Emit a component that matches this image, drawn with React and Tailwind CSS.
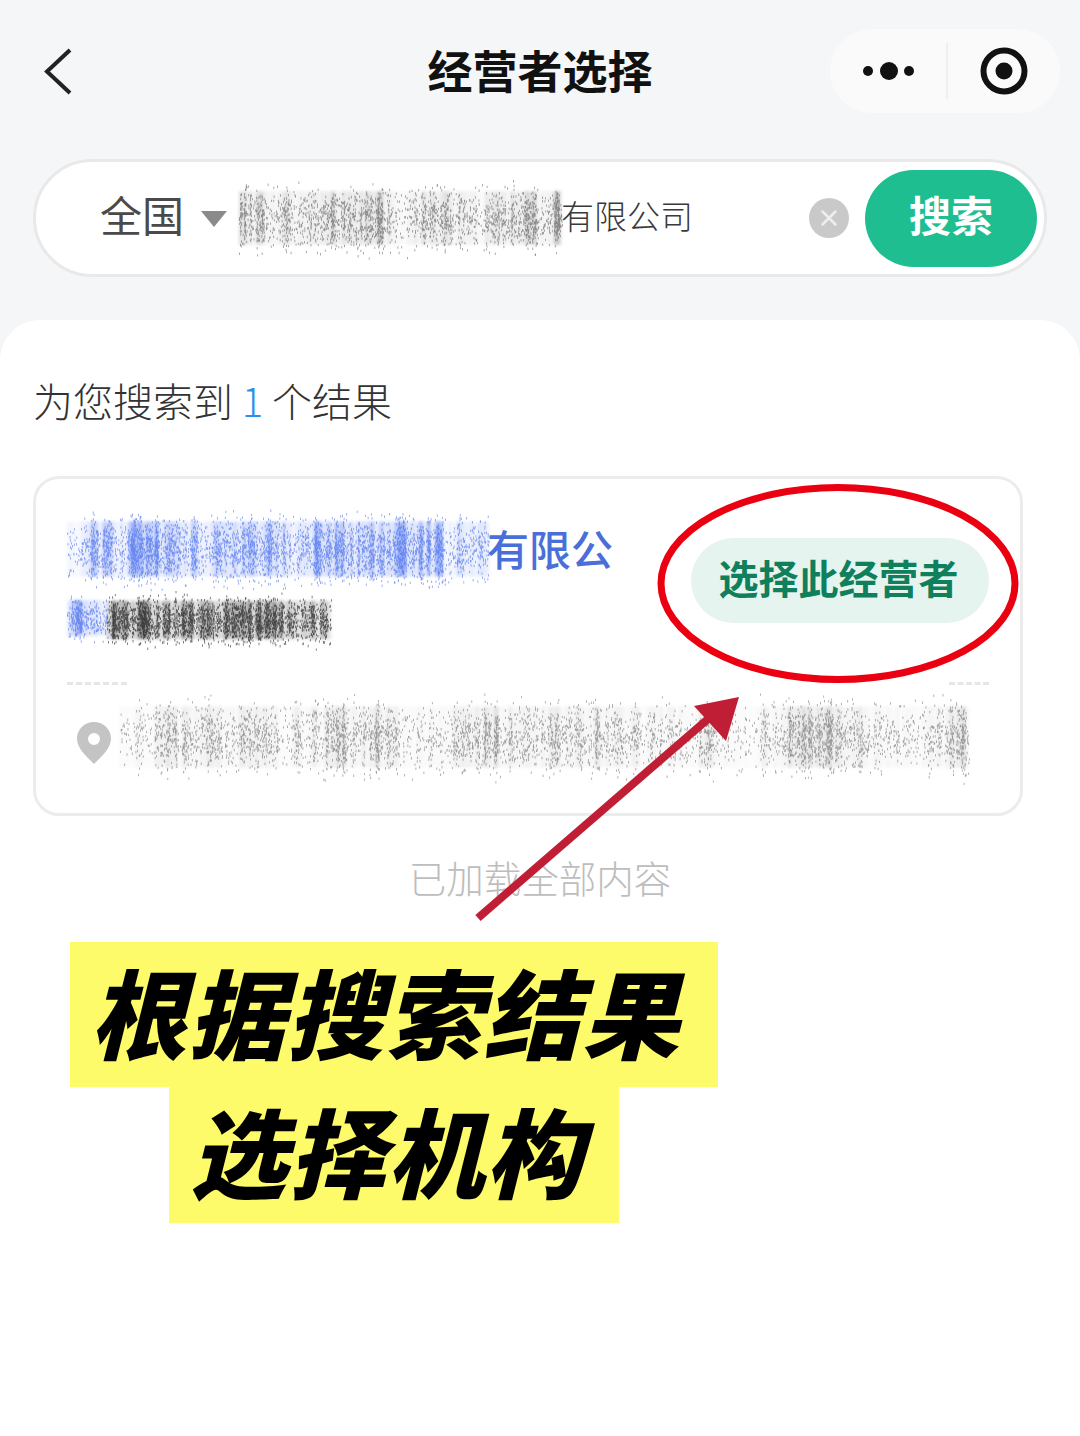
const CJK = "font-['Noto_Sans_CJK_SC','Noto_Sans',sans-serif]";

function seededRandom(seed) {
  let state = seed;
  return () => {
    state = (state + 0x6d2b79f5) | 0;
    let t = Math.imul(state ^ (state >>> 15), 1 | state);
    t = (t + Math.imul(t ^ (t >>> 7), 61 | t)) ^ t;
    return ((t ^ (t >>> 14)) >>> 0) / 4294967296;
  };
}

// the mosaic smear over private names in the photo: thin vertical streaks in uneven clumps
function buildSmear(width, height, seed, density, cell) {
  const random = seededRandom(seed);
  const bars = [];
  let dots = '';
  let x = 0;
  let clumpEnd = 0;
  let clump = 0.5;

  while (x < width) {
    if (x >= clumpEnd) {
      clumpEnd = x + cell * (0.3 + random());
      clump = 0.3 + random() * 0.7;
    }

    const barWidth = 1 + Math.floor(random() * 4);
    const strength = clump * (0.2 + random() * random() * 1.3);
    bars.push({ x, width: barWidth, strength: Math.min(strength, 1) });

    const count = Math.floor(barWidth * height * density * strength);
    for (let i = 0; i < count; i += 1) {
      const spread = (random() + random() + random()) / 3;
      const dotX = x + random() * barWidth;
      const dotY = spread * height;
      dots += `M${dotX.toFixed(1)} ${dotY.toFixed(1)}h0.8v2.4h-0.8z`;
    }

    x += barWidth;
  }

  return { bars, dots };
}

function Smear({ width, height, seed, color, density = 0.3, wash = 0.3, cell = 40, className = '' }) {
  const { bars, dots } = buildSmear(width, height, seed, density, cell);

  return (
    <svg
      width={width}
      height={height}
      viewBox={`0 0 ${width} ${height}`}
      className={`block shrink-0 overflow-visible ${className}`}
    >
      <g className="blur-[1.5px]">
        {bars.map((bar) => (
          <rect
            key={bar.x}
            x={bar.x}
            y={height * 0.18}
            width={bar.width}
            height={height * 0.64}
            fill={color}
            opacity={bar.strength * wash}
          />
        ))}
      </g>
      <path d={dots} fill={color} opacity="0.7" />
    </svg>
  );
}

function Capsule() {
  return (
    <div className="flex h-[84px] w-[230px] items-center rounded-full bg-[#fafafa]">
      <svg width="52" height="20" viewBox="0 0 52 20" className="ml-[33px]">
        <circle cx="5" cy="10" r="5" fill="#111" />
        <circle cx="26" cy="10" r="9" fill="#111" />
        <circle cx="46" cy="10" r="5" fill="#111" />
      </svg>
      <div className="ml-[31px] h-[56px] w-[2px] bg-[#efefef]" />
      <svg width="48" height="48" viewBox="0 0 48 48" className="ml-[32px]">
        <circle cx="24" cy="24" r="20.5" fill="none" stroke="#111" strokeWidth="6" />
        <circle cx="24" cy="24" r="8.5" fill="#111" />
      </svg>
    </div>
  );
}

function SearchBar() {
  return (
    <div className="mx-[33px] mt-[46px] flex h-[118px] items-center rounded-full border-[3px] border-[#e9e9e9] bg-white pr-[7px] pl-[64px]">
      <span className="pb-[9px] text-[42px] leading-none font-normal text-[#4a4a4a]">全国</span>
      <svg width="26" height="16" viewBox="0 0 26 16" className="mt-[2px] ml-[17px] blur-[0.5px]">
        <path d="M0 0h26L13 16z" fill="#8a8a8a" />
      </svg>
      <Smear width={322} height={84} seed={11} color="#6a6a6a" cell={34} wash={0.4} className="ml-[12px]" />
      <span className="pb-[6px] text-[33px] leading-none font-light text-[#3a3a3a]">有限公司</span>
      <svg width="40" height="40" viewBox="0 0 40 40" className="ml-auto">
        <circle cx="20" cy="20" r="20" fill="#c9c9c9" />
        <path d="M13.5 13.5l13 13M26.5 13.5l-13 13" stroke="#eee" strokeWidth="2.5" strokeLinecap="round" />
      </svg>
      <button
        type="button"
        className="ml-[16px] h-[97px] w-[172px] rounded-full bg-[#1ebe90] pb-[9px] text-[42px] font-bold text-white"
      >
        搜索
      </button>
    </div>
  );
}

function ResultCard() {
  return (
    <div className="mt-[49px] mr-[57px] ml-[33px] h-[340px] rounded-[26px] border-[3px] border-[#ececec] bg-white px-[31px]">
      <div className="flex h-[204px] items-start justify-between">
        <div className="pt-[27px]">
          <div className="flex items-center">
            <Smear width={422} height={86} seed={23} color="#4f74ee" cell={50} density={0.34} wash={0.6} />
            <span className="-ml-[2px] pb-[2px] text-[42px] leading-none font-medium text-[#4a6fd8]">有限公</span>
          </div>
          <div className="-mt-[2px] flex">
            <Smear width={40} height={56} seed={31} color="#4f74ee" cell={40} density={0.4} wash={0.65} />
            <Smear width={224} height={60} seed={37} color="#222" cell={44} density={0.45} wash={0.6} />
          </div>
        </div>
        <button
          type="button"
          className="mt-[59px] h-[85px] w-[298px] rounded-full bg-[#e6f4ef] pr-[3px] pb-[8px] text-[40px] font-bold text-[#0f7f5c]"
        >
          选择此经营者
        </button>
      </div>
      <div className="-mt-[1px] flex h-[3px] justify-between">
        <div className="w-[60px] border-b-[3px] border-dashed border-[#e6e6e6]" />
        <div className="w-[40px] border-b-[3px] border-dashed border-[#e6e6e6]" />
      </div>
      <div className="flex items-center pt-[4px]">
        <svg width="34" height="42" viewBox="0 0 34 42" className="mt-[12px] ml-[10px] shrink-0 blur-[0.5px]">
          <path
            fillRule="evenodd"
            d="M17 0c9.4 0 17 7.3 17 16.4C34 26 25 34 17 42 9 34 0 26 0 16.4 0 7.3 7.6 0 17 0zm0 11a6 6 0 1 0 0 12 6 6 0 0 0 0-12z"
            fill="#c4c4c4"
          />
        </svg>
        <Smear width={848} height={96} seed={47} color="#777" cell={36} density={0.2} wash={0.25} className="ml-[9px]" />
      </div>
    </div>
  );
}

function Annotations() {
  return (
    <svg width="1080" height="1436" viewBox="0 0 1080 1436" className="pointer-events-none absolute top-0 left-0">
      <ellipse cx="838" cy="583.5" rx="177" ry="96" fill="none" stroke="#ea0010" strokeWidth="7" />
      <path d="M478 918L716 712" stroke="#c01e35" strokeWidth="8" fill="none" />
      <path d="M739 697L694 706L726 741z" fill="#c01e35" />
    </svg>
  );
}

export default function App() {
  return (
    <div className={`relative flex h-[1436px] w-[1080px] flex-col overflow-hidden bg-[#f5f6f7] ${CJK}`}>
      <div className="h-[320px] shrink-0 pt-[29px]">
        <div className="relative flex h-[84px] items-center justify-center">
          <svg width="30" height="50" viewBox="0 0 30 50" className="absolute top-[18px] left-[44px]">
            <path d="M26 3L3 24.5L26 46" fill="none" stroke="#222" strokeWidth="4" />
          </svg>
          <h1 className="pb-[4px] text-[45px] leading-none font-semibold text-[#111]">经营者选择</h1>
          <div className="absolute top-0 right-[20px]">
            <Capsule />
          </div>
        </div>
        <SearchBar />
      </div>

      <main className="flex-1 rounded-t-[40px] bg-white pt-[53px]">
        <p className="pl-[33px] text-[40px] leading-[54px] font-light text-[#333]">
          为您搜索到 <span className="text-[#2f8fe8]">1</span> 个结果
        </p>
        <ResultCard />
        <p className="mt-[36px] text-center text-[37.5px] leading-[50px] font-light text-[#bdbdbd]">已加载全部内容</p>

        <div className="mt-[40px] ml-[70px] flex w-[648px] flex-col items-center text-center text-[97px] leading-none font-black tracking-[1.5px] text-black italic">
          <div className="flex h-[145px] w-[648px] items-center justify-center bg-[#fefb6a] pr-[18px] pb-[10px]">
            根据搜索结果
          </div>
          <div className="flex h-[136px] w-[450px] items-center justify-center bg-[#fefb6a] pr-[14px] pb-[14px]">
            选择机构
          </div>
        </div>
      </main>

      <Annotations />
    </div>
  );
}
